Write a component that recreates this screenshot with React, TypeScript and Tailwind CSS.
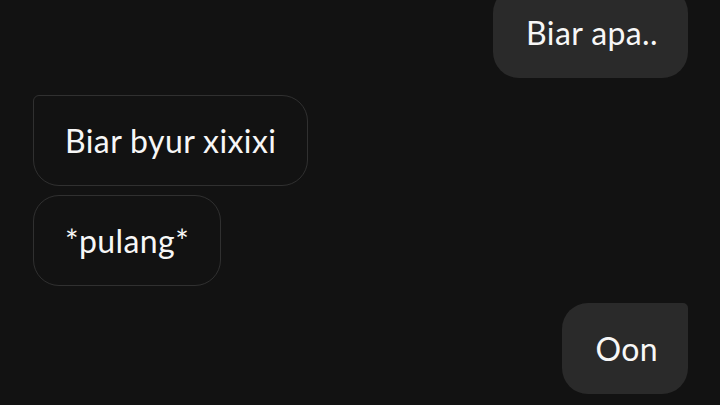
import React from "react";

type Msg = { text: string; me: boolean; corner?: string; mt: string };

const msgs: Msg[] = [
  { text: "Biar apa..", me: true, mt: "mt-[-13px]" },
  { text: "Biar byur xixixi", me: false, corner: "rounded-tl-[6px]", mt: "mt-[17px]" },
  { text: "*pulang*", me: false, mt: "mt-[9px]" },
  { text: "Oon", me: true, corner: "rounded-tr-[5px]", mt: "mt-[17px]" },
];

export default function App() {
  return (
    <div
      className="w-[720px] h-[405px] overflow-hidden bg-[#121212] flex flex-col pl-[33px] pr-[32px]"
      style={{ fontFamily: "Lato, 'Noto Sans', sans-serif" }}
    >
      {msgs.map((m, i) => (
        <div key={i} className={`flex shrink-0 ${m.me ? "justify-end" : "justify-start"} ${m.mt}`}>
          <div
            className={`h-[91px] flex items-center rounded-[26px] text-[32px] tracking-[0.4px] leading-none text-[#f7f7f7] whitespace-nowrap ${
              m.me ? "bg-[#2a2a2a] pl-[33px] pr-[30px]" : "border-[1.5px] border-[#303030] pl-[31px] pr-[31px]"
            } ${m.corner ?? ""}`}
          >
            {m.text}
          </div>
        </div>
      ))}
    </div>
  );
}
